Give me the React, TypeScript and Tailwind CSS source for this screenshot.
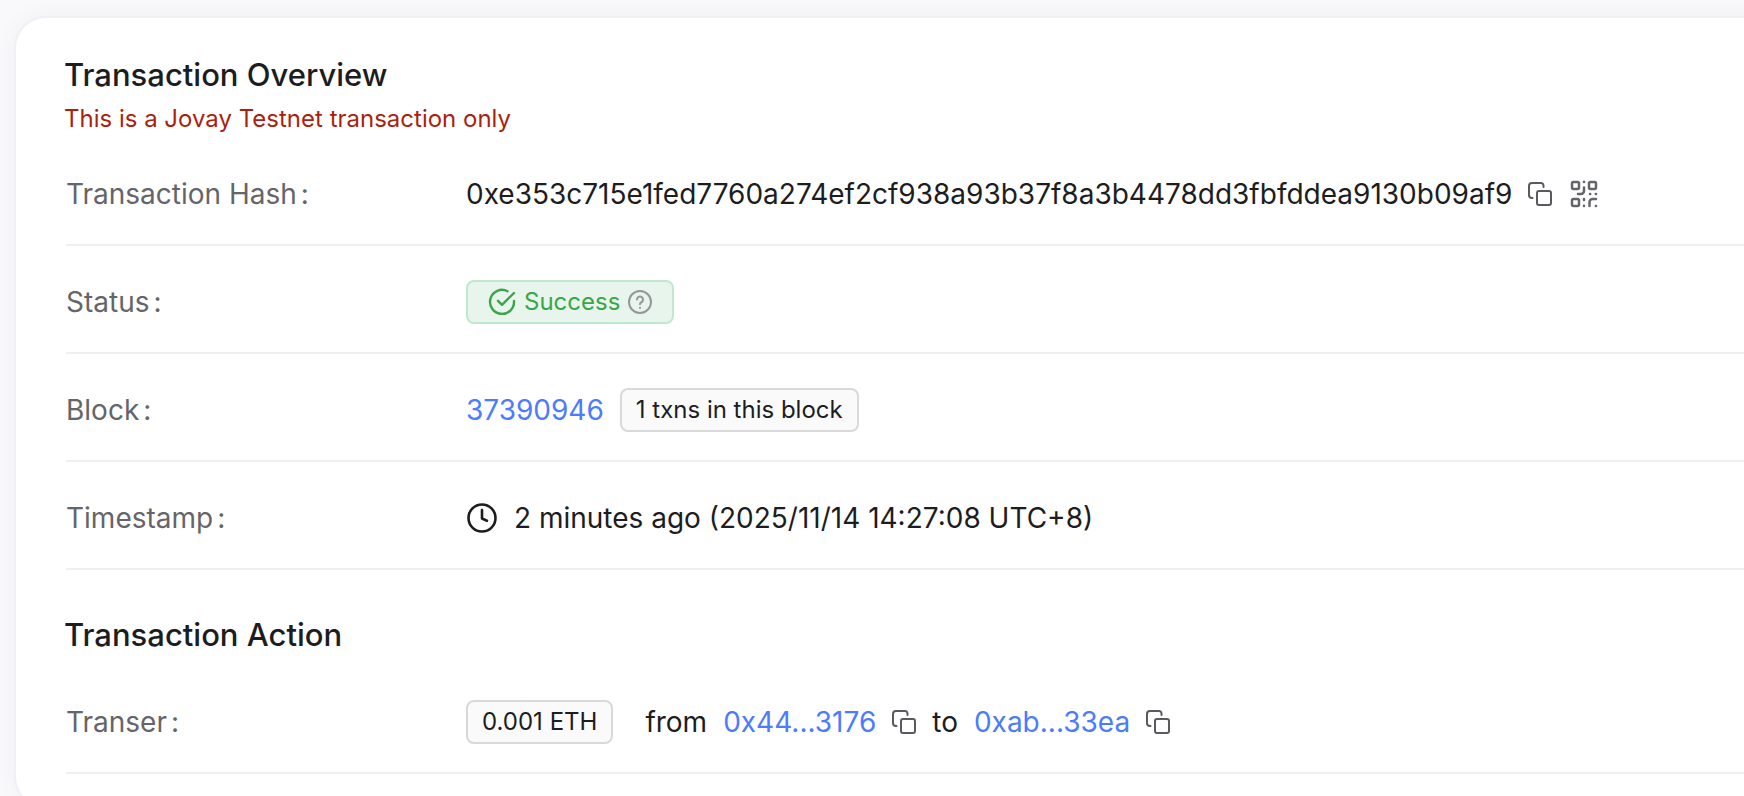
import type { ReactNode } from 'react';

function CopyIcon() {
    return (
        <svg viewBox="0 0 24 24" className="size-6" fill="none" stroke="currentColor" strokeWidth="2" strokeLinecap="round" strokeLinejoin="round">
            <rect x="9" y="9" width="14" height="14" rx="2" />
            <path d="M4.500 16H4a3 3 0 0 1-3-3V4a3 3 0 0 1 3-3h9a2.500 2.500 0 0 1 2.500 2.500V5" />
        </svg>
    );
}

function QrIcon() {
    return (
        <svg viewBox="0 0 28 28" className="size-7" fill="none" stroke="currentColor" strokeWidth="2.5" strokeLinecap="round" strokeLinejoin="round">
            <rect x="2" y="2" width="7" height="7" rx="1.5" />
            <rect x="19" y="2" width="7" height="7" rx="1.5" />
            <rect x="2" y="19" width="7" height="7" rx="1.5" />
            <path d="M14 1.800v.2M14 7.500V11a3 3 0 0 1-3 3H8M20 14h.2M25.800 14h.2M14 19v1M14 25.800v.2M19.500 26v-4a3 3 0 0 1 3-3H26M25.800 26h.2" />
        </svg>
    );
}

function CheckIcon() {
    return (
        <svg viewBox="0 0 28 28" className="size-7" fill="none" stroke="currentColor" strokeWidth="2.4" strokeLinecap="round" strokeLinejoin="round">
            <path d="M19.500 3.200A12 12 0 1 0 26 13" />
            <path d="m10 12.800 4 4L26 5" />
        </svg>
    );
}

function HelpIcon() {
    return (
        <svg viewBox="0 0 24 24" className="size-6" fill="none" stroke="currentColor" strokeWidth="2" strokeLinecap="round">
            <circle cx="12" cy="12" r="11" />
            <path d="M9 9.500a3 3 0 1 1 4.500 2.600c-1 .6-1.500 1-1.500 2.200M12 17.800v.1" />
        </svg>
    );
}

function ClockIcon() {
    return (
        <svg viewBox="0 0 32 32" className="size-8" fill="none" stroke="currentColor" strokeWidth="2.6" strokeLinecap="round" strokeLinejoin="round">
            <circle cx="16" cy="16" r="13.5" />
            <path d="M16 8v8.500l5 2.300" />
        </svg>
    );
}

function Row({ label, children }: { label: string; children: ReactNode }) {
    return (
        <div className="flex pt-[34px] pb-7 border-b-2 border-[#f0f0f0]">
            <dt className="w-[400px] shrink-0 leading-[44px] text-[#656569]">
                {label}
                <span className="ml-1">:</span>
            </dt>
            <dd className="flex h-11 items-center whitespace-nowrap">{children}</dd>
        </div>
    );
}

function Tag({ children }: { children: ReactNode }) {
    return (
        <span className="flex h-11 items-center rounded-lg border-2 border-[#d9d9d9] bg-[#fafafa] px-3.5 text-2xl">
            {children}
        </span>
    );
}

function CopyButton({ label }: { label: string }) {
    return (
        <button type="button" aria-label={label} className="text-[#5a5a5e]">
            <CopyIcon />
        </button>
    );
}

export default function App() {
    return (
        <main className="h-screen overflow-hidden bg-[#f9f9fb] pl-3.5 pt-4 font-['Inter',sans-serif] text-[28px] text-[#1d1d1f]">
            <section className="-mr-10 rounded-[32px] border-2 border-[#f0f0f5] bg-white pt-8 pb-8 pl-12 shadow-[0_0_24px_rgba(30,30,80,0.04)]">
                <h2 className="text-[31px] leading-[50px] font-medium">Transaction Overview</h2>
                <p className="text-2xl leading-[38px] text-[#ab1f0e]">This is a Jovay Testnet transaction only</p>
                <dl className="ml-0.5">
                    <Row label="Transaction Hash">
                        <span>0xe353c715e1fed7760a274ef2cf938a93b37f8a3b4478dd3fbfddea9130b09af9</span>
                        <span className="ml-4 flex items-center gap-[18px]">
                            <CopyButton label="Copy transaction hash" />
                            <button type="button" aria-label="Show QR code" className="text-[#656569]">
                                <QrIcon />
                            </button>
                        </span>
                    </Row>
                    <Row label="Status">
                        <span className="flex h-11 items-center gap-2 rounded-lg border-2 border-[#c1e7cf] bg-[#e8f5ec] px-5 text-2xl text-[#3aa54a]">
                            <CheckIcon />
                            Success
                            <span className="text-[#969696]">
                                <HelpIcon />
                            </span>
                        </span>
                    </Row>
                    <Row label="Block">
                        <span className="flex items-center gap-4">
                            <a href="#block" className="text-[#4c7bfd]">37390946</a>
                            <Tag>1 txns in this block</Tag>
                        </span>
                    </Row>
                    <Row label="Timestamp">
                        <span className="flex items-center gap-4">
                            <ClockIcon />
                            2 minutes ago (2025/11/14 14:27:08 UTC+8)
                        </span>
                    </Row>
                </dl>
                <h2 className="mt-10 mb-1.5 text-[31px] leading-[50px] font-medium">Transaction Action</h2>
                <dl className="ml-0.5">
                    <Row label="Transer">
                        <Tag>0.001 ETH</Tag>
                        <span className="ml-8 flex items-center gap-4">
                            from
                            <a href="#from" className="text-[#4c7bfd]">0x44...3176</a>
                            <CopyButton label="Copy sender address" />
                            to
                            <a href="#to" className="text-[#4c7bfd]">0xab...33ea</a>
                            <CopyButton label="Copy recipient address" />
                        </span>
                    </Row>
                </dl>
            </section>
        </main>
    );
}
